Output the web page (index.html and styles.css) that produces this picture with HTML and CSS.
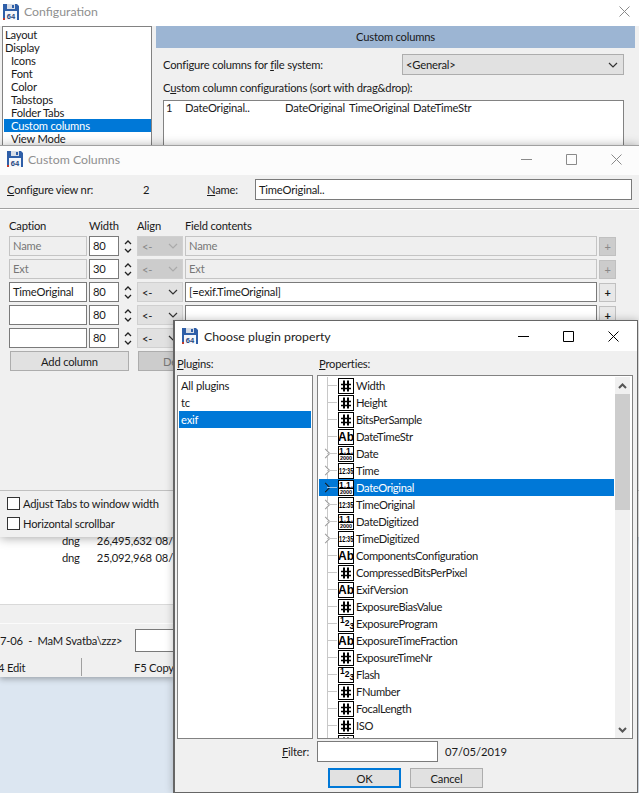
FILE: index.html
```html
<!DOCTYPE html>
<html lang="en">
<head>
<meta charset="utf-8">
<title>Configuration</title>
<link rel="stylesheet" href="styles.css">
</head>
<body>
<svg class="defs" width="0" height="0" aria-hidden="true">
  <symbol id="i-h" viewBox="0 0 16 16">
    <rect x=".5" y=".5" width="15" height="15" fill="#fff" stroke="#000"/>
    <path d="M6 2.500v11M10 2.500v11" stroke="#000" stroke-width="2"/>
    <path d="M3 6.500h10M3 10.500h10" stroke="#000" stroke-width="1.500"/>
  </symbol>
</svg>

<main class="desktop">

  <section class="win filewin">
    <div class="files">
      <div class="filerow"><span class="f-ext">dng</span><span class="f-size">26,495,632</span><span>08/</span></div>
      <div class="filerow"><span class="f-ext">dng</span><span class="f-size">25,092,968</span><span>08/</span></div>
    </div>
    <div class="gutter"></div>
    <div class="cmdline"><span class="cmd-path">7-06 &nbsp;-&nbsp; MaM Svatba\zzz&gt;</span><span class="cmd-input"></span></div>
    <div class="fkeys"><span class="fk-edit">4 Edit</span><span class="fk-sep"></span><span class="fk-copy">F5 Copy</span></div>
  </section>

  <section class="win configwin">
    <header class="titlebar tb-config">
      <svg class="appicon" viewBox="0 0 16 16"><path d="M0 0h14l2 2v14H0z" fill="#2f5fa8"/><rect x="4" width="8" height="5" fill="#d8dde6"/><rect x="9" y="1" width="2" height="3" fill="#2f5fa8"/><rect x="2" y="7" width="12" height="9" fill="#f4f6fa"/><rect y="14" width="2" height="2" fill="#c0392b"/><text class="disk" x="8" y="14.500">64</text></svg>
      <span class="title">Configuration</span>
      <span class="ctl close-only"><svg viewBox="0 0 11 11"><path d="M.5.5l10 10M10.500.5l-10 10"/></svg></span>
    </header>
    <div class="config-body">
      <ul class="navlist">
        <li>Layout</li>
        <li>Display</li>
        <li class="sub">Icons</li>
        <li class="sub">Font</li>
        <li class="sub">Color</li>
        <li class="sub">Tabstops</li>
        <li class="sub">Folder Tabs</li>
        <li class="sub on">Custom columns</li>
        <li class="sub">View Mode</li>
      </ul>
      <div class="config-main">
        <div class="banner">Custom columns</div>
        <div class="fsrow">
          <span>Configure columns for <u>f</u>ile system:</span>
          <span class="dropdown"><span>&lt;General&gt;</span><svg class="chev" viewBox="0 0 10 6"><path d="M1 1l4 4 4-4"/></svg></span>
        </div>
        <div class="cfglabel">C<u>u</u>stom column configurations (sort with drag&amp;drop):</div>
        <div class="cfglist">
          <span class="c1">1</span><span class="c2">DateOriginal..</span><span class="c3">DateOriginal</span><span class="c4">TimeOriginal</span><span>DateTimeStr</span>
        </div>
      </div>
    </div>
  </section>

  <section class="win columnswin">
    <header class="titlebar tb-columns">
      <svg class="appicon" viewBox="0 0 16 16"><path d="M0 0h14l2 2v14H0z" fill="#2f5fa8"/><rect x="4" width="8" height="5" fill="#d8dde6"/><rect x="9" y="1" width="2" height="3" fill="#2f5fa8"/><rect x="2" y="7" width="12" height="9" fill="#f4f6fa"/><rect y="14" width="2" height="2" fill="#c0392b"/><text class="disk" x="8" y="14.500">64</text></svg>
      <span class="title">Custom Columns</span>
      <span class="ctls dim">
        <span class="ctl"><svg viewBox="0 0 11 11"><path d="M0 5.500h11"/></svg></span>
        <span class="ctl"><svg viewBox="0 0 11 11"><path d="M.5.5h10v10H.5z"/></svg></span>
        <span class="ctl"><svg viewBox="0 0 11 11"><path d="M.5.5l10 10M10.500.5l-10 10"/></svg></span>
      </span>
    </header>
    <div class="viewrow">
      <span class="v-label"><u>C</u>onfigure view nr:</span>
      <span class="v-num">2</span>
      <span class="v-name"><u>N</u>ame:</span>
      <span class="field v-input">TimeOriginal..</span>
    </div>
    <div class="colgrid">
      <span>Caption</span><span>Width</span><span></span><span>Align</span><span class="head-span">Field contents</span>

      <span class="field off">Name</span><span class="field">80</span><span class="spin"><svg viewBox="0 0 8 15"><path d="M1 5l3-3 3 3M1 10l3 3 3-3"/></svg></span><span class="alignsel off"><span>&lt;-</span><svg class="chev" viewBox="0 0 10 6"><path d="M1 1l4 4 4-4"/></svg></span><span class="field off">Name</span><span class="plus off">+</span>

      <span class="field off">Ext</span><span class="field">30</span><span class="spin"><svg viewBox="0 0 8 15"><path d="M1 5l3-3 3 3M1 10l3 3 3-3"/></svg></span><span class="alignsel off"><span>&lt;-</span><svg class="chev" viewBox="0 0 10 6"><path d="M1 1l4 4 4-4"/></svg></span><span class="field off">Ext</span><span class="plus off">+</span>

      <span class="field">TimeOriginal</span><span class="field">80</span><span class="spin"><svg viewBox="0 0 8 15"><path d="M1 5l3-3 3 3M1 10l3 3 3-3"/></svg></span><span class="alignsel"><span>&lt;-</span><svg class="chev" viewBox="0 0 10 6"><path d="M1 1l4 4 4-4"/></svg></span><span class="field">[=exif.TimeOriginal]</span><span class="plus">+</span>

      <span class="field"></span><span class="field">80</span><span class="spin"><svg viewBox="0 0 8 15"><path d="M1 5l3-3 3 3M1 10l3 3 3-3"/></svg></span><span class="alignsel"><span>&lt;-</span><svg class="chev" viewBox="0 0 10 6"><path d="M1 1l4 4 4-4"/></svg></span><span class="field"></span><span class="plus">+</span>

      <span class="field"></span><span class="field">80</span><span class="spin"><svg viewBox="0 0 8 15"><path d="M1 5l3-3 3 3M1 10l3 3 3-3"/></svg></span><span class="alignsel"><span>&lt;-</span><svg class="chev" viewBox="0 0 10 6"><path d="M1 1l4 4 4-4"/></svg></span><span class="field"></span><span class="plus">+</span>
    </div>
    <div class="colbtns">
      <span class="btn">Add column</span>
      <span class="btn off">Delete column</span>
    </div>
    <div class="checks">
      <label class="check"><span class="box"></span>Adjust Tabs to window width</label>
      <label class="check"><span class="box"></span>Horizontal scrollbar</label>
    </div>
  </section>

  <section class="win pluginwin">
    <header class="titlebar tb-plugin">
      <svg class="appicon" viewBox="0 0 16 16"><path d="M0 0h14l2 2v14H0z" fill="#2f5fa8"/><rect x="4" width="8" height="5" fill="#d8dde6"/><rect x="9" y="1" width="2" height="3" fill="#2f5fa8"/><rect x="2" y="7" width="12" height="9" fill="#f4f6fa"/><rect y="14" width="2" height="2" fill="#c0392b"/><text class="disk" x="8" y="14.500">64</text></svg>
      <span class="title">Choose plugin property</span>
      <span class="ctls">
        <span class="ctl"><svg viewBox="0 0 11 11"><path d="M0 5.500h11"/></svg></span>
        <span class="ctl"><svg viewBox="0 0 11 11"><path d="M.5.5h10v10H.5z"/></svg></span>
        <span class="ctl"><svg viewBox="0 0 11 11"><path d="M.5.5l10 10M10.500.5l-10 10"/></svg></span>
      </span>
    </header>
    <div class="plugin-body">
      <div class="panes">
        <div class="pane-left">
          <div class="panelabel"><u>P</u>lugins:</div>
          <ul class="pluginlist">
            <li>All plugins</li>
            <li>tc</li>
            <li class="on">exif</li>
          </ul>
        </div>
        <div class="pane-right">
          <div class="panelabel"><u>P</u>roperties:</div>
          <div class="treebox">
            <ul class="tree">
              <li><svg class="pi"><use href="#i-h"/></svg>Width</li>
              <li><svg class="pi"><use href="#i-h"/></svg>Height</li>
              <li><svg class="pi"><use href="#i-h"/></svg>BitsPerSample</li>
              <li><span class="pi pa">Ab</span>DateTimeStr</li>
              <li class="exp"><span class="pi pd"><b>1.1.</b><i>2000</i></span>Date</li>
              <li class="exp"><span class="pi pt"><b>12:35</b></span>Time</li>
              <li class="exp on"><span class="pi pd"><b>1.1.</b><i>2000</i></span>DateOriginal</li>
              <li class="exp"><span class="pi pt"><b>12:35</b></span>TimeOriginal</li>
              <li class="exp"><span class="pi pd"><b>1.1.</b><i>2000</i></span>DateDigitized</li>
              <li class="exp"><span class="pi pt"><b>12:35</b></span>TimeDigitized</li>
              <li><span class="pi pa">Ab</span>ComponentsConfiguration</li>
              <li><svg class="pi"><use href="#i-h"/></svg>CompressedBitsPerPixel</li>
              <li><span class="pi pa">Ab</span>ExifVersion</li>
              <li><svg class="pi"><use href="#i-h"/></svg>ExposureBiasValue</li>
              <li><span class="pi pn"><b>1</b><b>2</b><b>3</b></span>ExposureProgram</li>
              <li><span class="pi pa">Ab</span>ExposureTimeFraction</li>
              <li><svg class="pi"><use href="#i-h"/></svg>ExposureTimeNr</li>
              <li><span class="pi pn"><b>1</b><b>2</b><b>3</b></span>Flash</li>
              <li><svg class="pi"><use href="#i-h"/></svg>FNumber</li>
              <li><svg class="pi"><use href="#i-h"/></svg>FocalLength</li>
              <li><svg class="pi"><use href="#i-h"/></svg>ISO</li>
              <li><svg class="pi"><use href="#i-h"/></svg></li>
            </ul>
            <div class="scrollbar">
              <span class="sb-arrow"><svg viewBox="0 0 9 6"><path d="M1 5l3.500-3.500L8 5"/></svg></span>
              <span class="sb-thumb"></span>
              <span class="sb-arrow sb-down"><svg viewBox="0 0 9 6"><path d="M1 1l3.500 3.500L8 1"/></svg></span>
            </div>
          </div>
        </div>
      </div>
      <div class="filterrow">
        <span class="f-label"><u>F</u>ilter:</span>
        <span class="field f-input"></span>
        <span class="f-date">07/05/2019</span>
      </div>
      <div class="okrow">
        <span class="btn default">OK</span>
        <span class="btn">Cancel</span>
      </div>
    </div>
  </section>

</main>
</body>
</html>
```
FILE: styles.css
```css
* { box-sizing: border-box; }
html, body { margin: 0; padding: 0; height: 100%; }
body {
  font-family: Lato, "Liberation Sans", sans-serif;
  font-size: 11.200px;
  letter-spacing: -.2px;
  color: #1a1a1a;
  overflow: hidden;
}
.defs { position: absolute; }
ul { list-style: none; margin: 0; padding: 0; }
u { text-underline-offset: 1px; }

.desktop {
  position: relative;
  width: 639px;
  height: 793px;
  background: #dce6f1;
  overflow: hidden;
}

.win {
  position: absolute;
  display: flex;
  flex-direction: column;
  background: #f0f0f0;
}

/* title bars */
.titlebar { display: flex; align-items: center; background: #fff; flex: none; }
.appicon { width: 16px; height: 16px; flex: none; }
.disk { font: 700 7.500px "Liberation Sans", sans-serif; text-anchor: middle; fill: #24477f; letter-spacing: 0; }
.title { font-size: 12.300px; color: #8f8f8f; letter-spacing: 0; }
.ctls { display: flex; margin-left: auto; }
.ctl { width: 45px; display: flex; align-items: center; justify-content: center; }
.ctl svg { width: 11px; height: 11px; fill: none; stroke: #000; stroke-width: 1; }
.dim .ctl svg, .close-only svg { stroke: #8a8a8a; }
.close-only { margin-left: auto; margin-right: -8px; }

/* background main window */
.filewin { left: 0; top: 500px; width: 173px; height: 177px; box-shadow: 0 2px 6px rgba(0,0,0,.3); }
.files { height: 105px; flex: none; background: #fff; padding-top: 32px; border-bottom: 1px solid #d9d9d9; }
.filerow { height: 17px; display: flex; align-items: center; white-space: nowrap; }
.f-ext { margin-left: 62px; width: 35px; }
.f-size { width: 59px; }
.gutter { height: 19px; flex: none; border-bottom: 1px solid #fbfbfb; }
.cmdline { height: 33px; flex: none; display: flex; align-items: center; white-space: nowrap; overflow: hidden; }
.cmd-path { margin-left: 0; width: 135px; flex: none; }
.cmd-input { width: 40px; height: 23px; flex: none; background: #fff; border: 1px solid #7a7a7a; }
.fkeys { height: 20px; flex: none; display: flex; align-items: center; white-space: nowrap; overflow: hidden; }
.fk-edit { width: 81px; flex: none; text-indent: -2px; }
.fk-sep { width: 1px; height: 18px; background: #a0a0a0; flex: none; }
.fk-copy { margin-left: 52px; }

/* configuration window */
.configwin { left: 0; top: 0; width: 639px; height: 146px; overflow: hidden; }
.tb-config { height: 26px; padding: 0 0 3px 3px; }
.tb-config .title { margin-left: 5px; }
.config-body { display: flex; flex: 1; padding-left: 2px; min-height: 0; }
.navlist { width: 150px; flex: none; background: #fff; border: 1px solid #828282; padding: 1px 0 0 1px; }
.navlist li { height: 13px; line-height: 13px; padding-left: 1px; white-space: nowrap; }
.navlist .sub { padding-left: 7px; }
.on { background: #0078d7; color: #fff; }
.config-main { flex: none; width: 479px; margin-left: 4px; display: flex; flex-direction: column; }
.banner { height: 22px; flex: none; background: #9cb5d3; text-align: center; line-height: 22px; }
.fsrow { display: flex; align-items: center; padding-left: 7px; margin-top: 6px; height: 21px; flex: none; }
.dropdown { margin-left: auto; margin-right: 11px; width: 222px; height: 21px; background: #e1e1e1; border: 1px solid #adadad; display: flex; align-items: center; justify-content: space-between; padding: 0 5px 0 3px; }
.chev { width: 10px; height: 6px; fill: none; stroke: #333; stroke-width: 1.200; flex: none; }
.cfglabel { padding-left: 7px; margin-top: 5px; height: 16px; line-height: 15px; flex: none; }
.cfglist { margin: 4px 11px 0 7px; flex: 1; background: #fff; border: 1px solid #828282; border-bottom: 0; padding: 0 2px; display: flex; white-space: nowrap; }
.c1 { width: 19px; }
.c2 { width: 100px; }
.c3, .c4 { width: 64px; }

/* custom columns window */
.columnswin { left: 0; top: 145px; width: 639px; height: 392px; border-top: 1px solid #a0a0a0; box-shadow: 0 1px 10px rgba(0,0,0,.35); }
.tb-columns { height: 29px; padding: 0 0 3px 7px; background: #fcfcfc; }
.tb-columns .title { margin-left: 5px; }
.viewrow { height: 34px; flex: none; display: flex; align-items: center; padding: 4px 7px 8px; border-bottom: 1px solid #a0a0a0; box-shadow: 0 1px 0 #fff; }
.v-label { width: 136px; }
.v-num { width: 64px; }
.v-name { width: 48px; }
.field {
  display: flex;
  align-items: center;
  height: 20px;
  background: #fff;
  border: 1px solid #7a7a7a;
  padding: 0 2px 1px 3px;
  white-space: nowrap;
  overflow: hidden;
}
.field.off { background: #efefef; border-color: #c4c4c4; color: #777; }
.v-input { width: 377px; height: 21px; }
.colgrid {
  display: grid;
  grid-template-columns: 78px 30px 14px 46px 412px 17px;
  grid-auto-rows: 20px;
  grid-template-rows: 15px;
  gap: 3px 2px;
  margin: 8px 0 0 9px;
  flex: none;
  align-items: center;
  padding-top: 1px;
}
.head-span { grid-column: span 2; }
.spin { display: flex; justify-content: center; }
.spin svg { width: 8px; height: 15px; fill: none; stroke: #222; stroke-width: 1.300; }
.alignsel { height: 20px; background: #e1e1e1; border: 1px solid #d0d0d0; display: flex; align-items: center; justify-content: space-between; padding: 0 4px; }
.alignsel.off { background: #cccccc; color: #888; }
.alignsel.off .chev { stroke: #aaa; }
.plus { height: 19px; background: #e8e8e8; border: 1px solid #c0c0c0; display: flex; align-items: center; justify-content: center; font-weight: 700; font-size: 11px; }
.plus.off { background: #ccc; color: #888; font-weight: 400; }
.colbtns { display: flex; gap: 9px; margin: 3px 0 0 10px; flex: none; }
.btn { width: 119px; height: 20px; background: #e1e1e1; border: 1px solid #adadad; display: flex; align-items: center; justify-content: center; flex: none; }
.btn.off { background: #ccc; color: #777; }
.checks { margin-top: auto; padding: 0 0 6px 7px; border-top: 1px solid #c0c0c0; height: 47px; display: flex; flex-direction: column; justify-content: flex-end; gap: 4px; flex: none; }
.check { display: flex; align-items: center; height: 16px; }
.box { width: 13px; height: 13px; background: #fff; border: 1px solid #333; margin-right: 3px; flex: none; }

/* plugin window */
.pluginwin { left: 173px; top: 320px; width: 465px; height: 473px; border: 1px solid #666; border-left-width: 2px; box-shadow: 0 0 8px rgba(0,0,0,.25); }
.tb-plugin { height: 30px; padding-left: 7px; }
.tb-plugin .title { margin-left: 6px; color: #222; }
.tb-plugin .ctls { margin-right: 1px; }
.plugin-body { flex: 1; display: flex; flex-direction: column; padding: 0 4px 0 2px; min-height: 0; }
.panes { display: flex; gap: 4px; flex: none; }
.panelabel { height: 24px; line-height: 26px; flex: none; }
.pane-left { width: 136px; flex: none; }
.pane-right { width: 316px; flex: none; }
.pane-right .panelabel { padding-left: 2px; }
.pluginlist { height: 364px; background: #fff; border: 1px solid #828282; padding: 1px; }
.pluginlist li { height: 17px; line-height: 17px; padding-left: 2px; }
.treebox { height: 364px; background: #fff; border: 1px solid #828282; padding: 1px 2px 0 1px; display: flex; overflow: hidden; }
.tree { flex: 1; min-width: 0; overflow: hidden; background: linear-gradient(#c8c8c8, #c8c8c8) 8px 0 / 1px 100% no-repeat; letter-spacing: -.35px; }
.tree li { position: relative; height: 17px; display: flex; align-items: center; padding-left: 19px; white-space: nowrap; }
.tree li::after { content: ""; position: absolute; left: 8px; top: 8px; width: 10px; border-top: 1px solid #c8c8c8; }
.tree li.exp::before { content: ""; position: absolute; left: 3px; top: 5px; width: 6px; height: 6px; background: #fff; border-top: 1px solid #999; border-right: 1px solid #999; transform: rotate(45deg); }
.tree li.on::before { background: #0078d7; border-color: #1a1a1a; }
.tree li.on::after { border-color: #9cc4e8; }
.pi { width: 16px; height: 16px; flex: none; margin-right: 2px; }
span.pi { background: #fff; border: 1px solid #000; color: #000; font-weight: 700; display: flex; overflow: hidden; font-family: "Liberation Sans", sans-serif; letter-spacing: 0; }
.pa { font-size: 12px; letter-spacing: -.4px; align-items: center; justify-content: center; }
.pd { flex-direction: column; align-items: center; line-height: 1; }
.pd b { font-size: 8.500px; height: 8px; line-height: 8px; border-bottom: 1px solid #000; width: 100%; text-align: center; }
.pd i { font-style: normal; font-size: 5.500px; line-height: 6px; }
.pt { align-items: center; justify-content: center; }
.pt b { font-size: 9.500px; transform: scaleX(.58); flex: none; }
.pn { font-size: 8.500px; line-height: 7px; padding: 0 1px; justify-content: space-between; }
.pn b:nth-child(2) { margin-top: 3px; }
.pn b:nth-child(3) { margin-top: 6px; }
.scrollbar { width: 15px; flex: none; margin-left: 1px; display: flex; flex-direction: column; background: #f0f0f0; height: 361px; }
.sb-arrow { height: 17px; flex: none; display: flex; align-items: center; justify-content: center; }
.sb-arrow svg { width: 9px; height: 6px; fill: none; stroke: #555; stroke-width: 2; }
.sb-down { margin-top: auto; }
.sb-thumb { height: 116px; background: #cdcdcd; flex: none; }
.filterrow { display: flex; align-items: center; height: 21px; margin-top: 2px; flex: none; }
.f-label { width: 132px; margin-right: 8px; text-align: right; }
.f-input { width: 121px; height: 21px; }
.f-date { margin-left: 7px; letter-spacing: 0; }
.okrow { display: flex; gap: 9px; margin: 6px 0 0 151px; flex: none; }
.okrow .btn { width: 73px; }
.btn.default { border: 2px solid #0078d7; }
```
